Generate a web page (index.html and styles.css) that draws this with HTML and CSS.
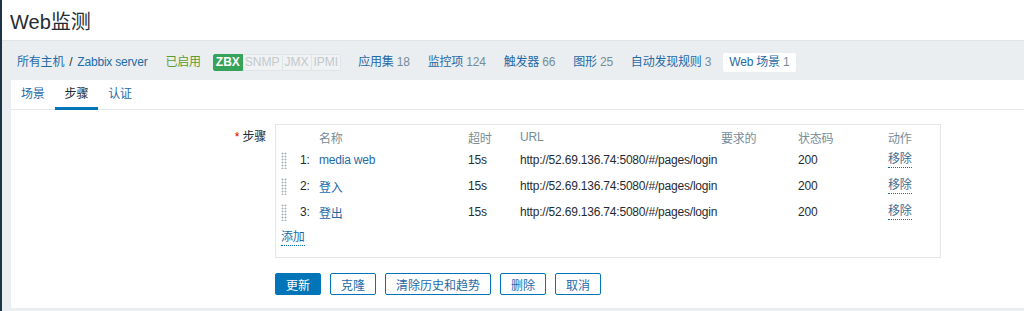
FILE: index.html
```html
<!doctype html>
<html lang="zh-CN">

<head>
    <meta charset="UTF-8" />
    <meta name="viewport" content="width=device-width, initial-scale=1.0" />
    <title>Web监测</title>
    <link rel="stylesheet" href="styles.css">
</head>

<body>
    <header class="page-title">
        <h1>Web监测</h1>
    </header>

    <nav class="host-nav">
        <div class="nav-item breadcrumbs">
            <a href="#">所有主机</a><span class="sep">/</span><a href="#">Zabbix server</a>
        </div>
        <div class="nav-item status-on">已启用</div>
        <div class="badges">
            <span class="badge badge-on">ZBX</span><span class="badge">SNMP</span><span class="badge">JMX</span><span class="badge">IPMI</span>
        </div>
        <div class="nav-item"><a href="#">应用集</a> <span class="count">18</span></div>
        <div class="nav-item"><a href="#">监控项</a> <span class="count">124</span></div>
        <div class="nav-item"><a href="#">触发器</a> <span class="count">66</span></div>
        <div class="nav-item"><a href="#">图形</a> <span class="count">25</span></div>
        <div class="nav-item"><a href="#">自动发现规则</a> <span class="count">3</span></div>
        <div class="nav-item selected"><a href="#">Web 场景</a> <span class="count">1</span></div>
    </nav>

    <main class="content">
        <ul class="tabs">
            <li><a href="#">场景</a></li>
            <li class="active">步骤</li>
            <li><a href="#">认证</a></li>
        </ul>

        <form class="step-form">
            <div class="form-row">
                <label class="field-label"><span class="required">*</span> 步骤</label>
                <div class="steps-box">
                    <table class="steps">
                        <colgroup>
                            <col class="col-handle">
                            <col class="col-num">
                            <col class="col-name">
                            <col class="col-timeout">
                            <col class="col-url">
                            <col class="col-required">
                            <col class="col-status">
                            <col>
                        </colgroup>
                        <thead>
                            <tr>
                                <th></th>
                                <th></th>
                                <th>名称</th>
                                <th>超时</th>
                                <th>URL</th>
                                <th>要求的</th>
                                <th>状态码</th>
                                <th>动作</th>
                            </tr>
                        </thead>
                        <tbody>
                            <tr>
                                <td><div class="drag-handle"></div></td>
                                <td>1:</td>
                                <td><a href="#">media web</a></td>
                                <td>15s</td>
                                <td>http://52.69.136.74:5080/#/pages/login</td>
                                <td></td>
                                <td>200</td>
                                <td><button type="button" class="btn-link remove">移除</button></td>
                            </tr>
                            <tr>
                                <td><div class="drag-handle"></div></td>
                                <td>2:</td>
                                <td><a href="#">登入</a></td>
                                <td>15s</td>
                                <td>http://52.69.136.74:5080/#/pages/login</td>
                                <td></td>
                                <td>200</td>
                                <td><button type="button" class="btn-link remove">移除</button></td>
                            </tr>
                            <tr>
                                <td><div class="drag-handle"></div></td>
                                <td>3:</td>
                                <td><a href="#">登出</a></td>
                                <td>15s</td>
                                <td>http://52.69.136.74:5080/#/pages/login</td>
                                <td></td>
                                <td>200</td>
                                <td><button type="button" class="btn-link remove">移除</button></td>
                            </tr>
                            <tr class="add-row">
                                <td colspan="8"><button type="button" class="btn-link">添加</button></td>
                            </tr>
                        </tbody>
                    </table>
                </div>
            </div>

            <div class="form-actions">
                <button type="button" class="btn primary">更新</button>
                <button type="button" class="btn">克隆</button>
                <button type="button" class="btn">清除历史和趋势</button>
                <button type="button" class="btn">删除</button>
                <button type="button" class="btn">取消</button>
            </div>
        </form>
    </main>
</body>

</html>
```

FILE: styles.css
```css
body {
    font-family: "Liberation Sans", Arial, "Noto Sans CJK SC", sans-serif;
    font-size: 12px;
    letter-spacing: -0.2px;
    color: #1f2c33;
    margin: 0;
    min-height: 100vh;
    background: #ebeef0;
    border-left: 2px solid #1c3347;
}

a {
    color: #1f6aa8;
    text-decoration: none;
}

/* page title */
.page-title {
    height: 40px;
    background: #fff;
    border-bottom: 1px solid #dfe4e7;
    padding-left: 8px;
    display: flex;
    align-items: center;
}

.page-title h1 {
    margin: 0;
    font-size: 20px;
    font-weight: normal;
    letter-spacing: 0;
}

/* host navigation */
.host-nav {
    height: 39px;
    box-sizing: border-box;
    padding: 4px 0 0 9px;
    display: flex;
    align-items: center;
    gap: 6px;
}

.nav-item {
    padding: 0 6px;
    height: 19px;
    line-height: 19px;
    white-space: nowrap;
}

.breadcrumbs .sep {
    color: #1f2c33;
    margin: 0 5px;
}

.status-on {
    color: #5d9c34;
}

.count {
    color: #768d99;
}

.nav-item.selected {
    background: #fff;
    border-radius: 2px;
}

.badges {
    display: flex;
    margin-right: 5px;
}

.badge {
    height: 15px;
    line-height: 15px;
    padding: 0 2px;
    letter-spacing: 0;
    color: #c2c9ce;
    background: #f0f2f4;
    border: 1px solid #dfe4e7;
    border-left: none;
}

.badge:last-child {
    border-radius: 0 2px 2px 0;
}

.badge-on {
    font-weight: bold;
    color: #fff;
    background: #35a35a;
    border: 1px solid #35a35a;
    border-radius: 2px 0 0 2px;
}

/* content */
.content {
    margin-left: 9px;
    background: #fff;
}

.tabs {
    list-style: none;
    margin: 0;
    padding: 0;
    height: 29px;
    display: flex;
    border-bottom: 1px solid #e6e9ec;
}

.tabs li {
    padding: 0 10px;
    line-height: 29px;
}

.tabs li.active {
    box-shadow: inset 0 -3px 0 #0275b8;
    height: 30px;
}

.step-form {
    padding: 14px 0 13px;
}

.form-row {
    display: grid;
    grid-template-columns: 255px 666px;
    column-gap: 9px;
}

.field-label {
    text-align: right;
    padding-top: 5px;
    line-height: 16px;
}

.required {
    color: #d40000;
}

.steps-box {
    border: 1px solid #e3e7ea;
    padding: 2px 0 6px 5px;
}

.steps {
    width: 100%;
    border-collapse: collapse;
    table-layout: fixed;
}

.col-handle {
    width: 19px;
}

.col-num {
    width: 19px;
}

.col-name {
    width: 149px;
}

.col-timeout {
    width: 52px;
}

.col-url {
    width: 201px;
}

.col-required {
    width: 77px;
}

.col-status {
    width: 90px;
}

.steps th {
    height: 20px;
    padding: 0;
    text-align: left;
    font-weight: normal;
    color: #768d99;
}

.steps td {
    height: 26px;
    padding: 0;
    white-space: nowrap;
}

.drag-handle {
    width: 6px;
    height: 17px;
    background-image: radial-gradient(circle, #a9b4bc 0.9px, transparent 1.1px);
    background-size: 3px 3px;
}

.btn-link {
    font: inherit;
    letter-spacing: inherit;
    color: #1f6aa8;
    background: none;
    border: none;
    border-bottom: 1px dotted #0275b8;
    padding: 0;
    cursor: pointer;
    line-height: 15px;
}

.btn-link.remove {
    color: #3f6a92;
}

.form-actions {
    margin: 15px 0 0 264px;
    display: flex;
    gap: 9px;
}

.btn {
    height: 22px;
    padding: 0 10px;
    font: inherit;
    letter-spacing: 0;
    color: #1f6aa8;
    background: #fff;
    border: 1px solid #0275b8;
    border-radius: 2px;
    cursor: pointer;
}

.btn.primary {
    color: #fff;
    background: #0275b8;
}
```
